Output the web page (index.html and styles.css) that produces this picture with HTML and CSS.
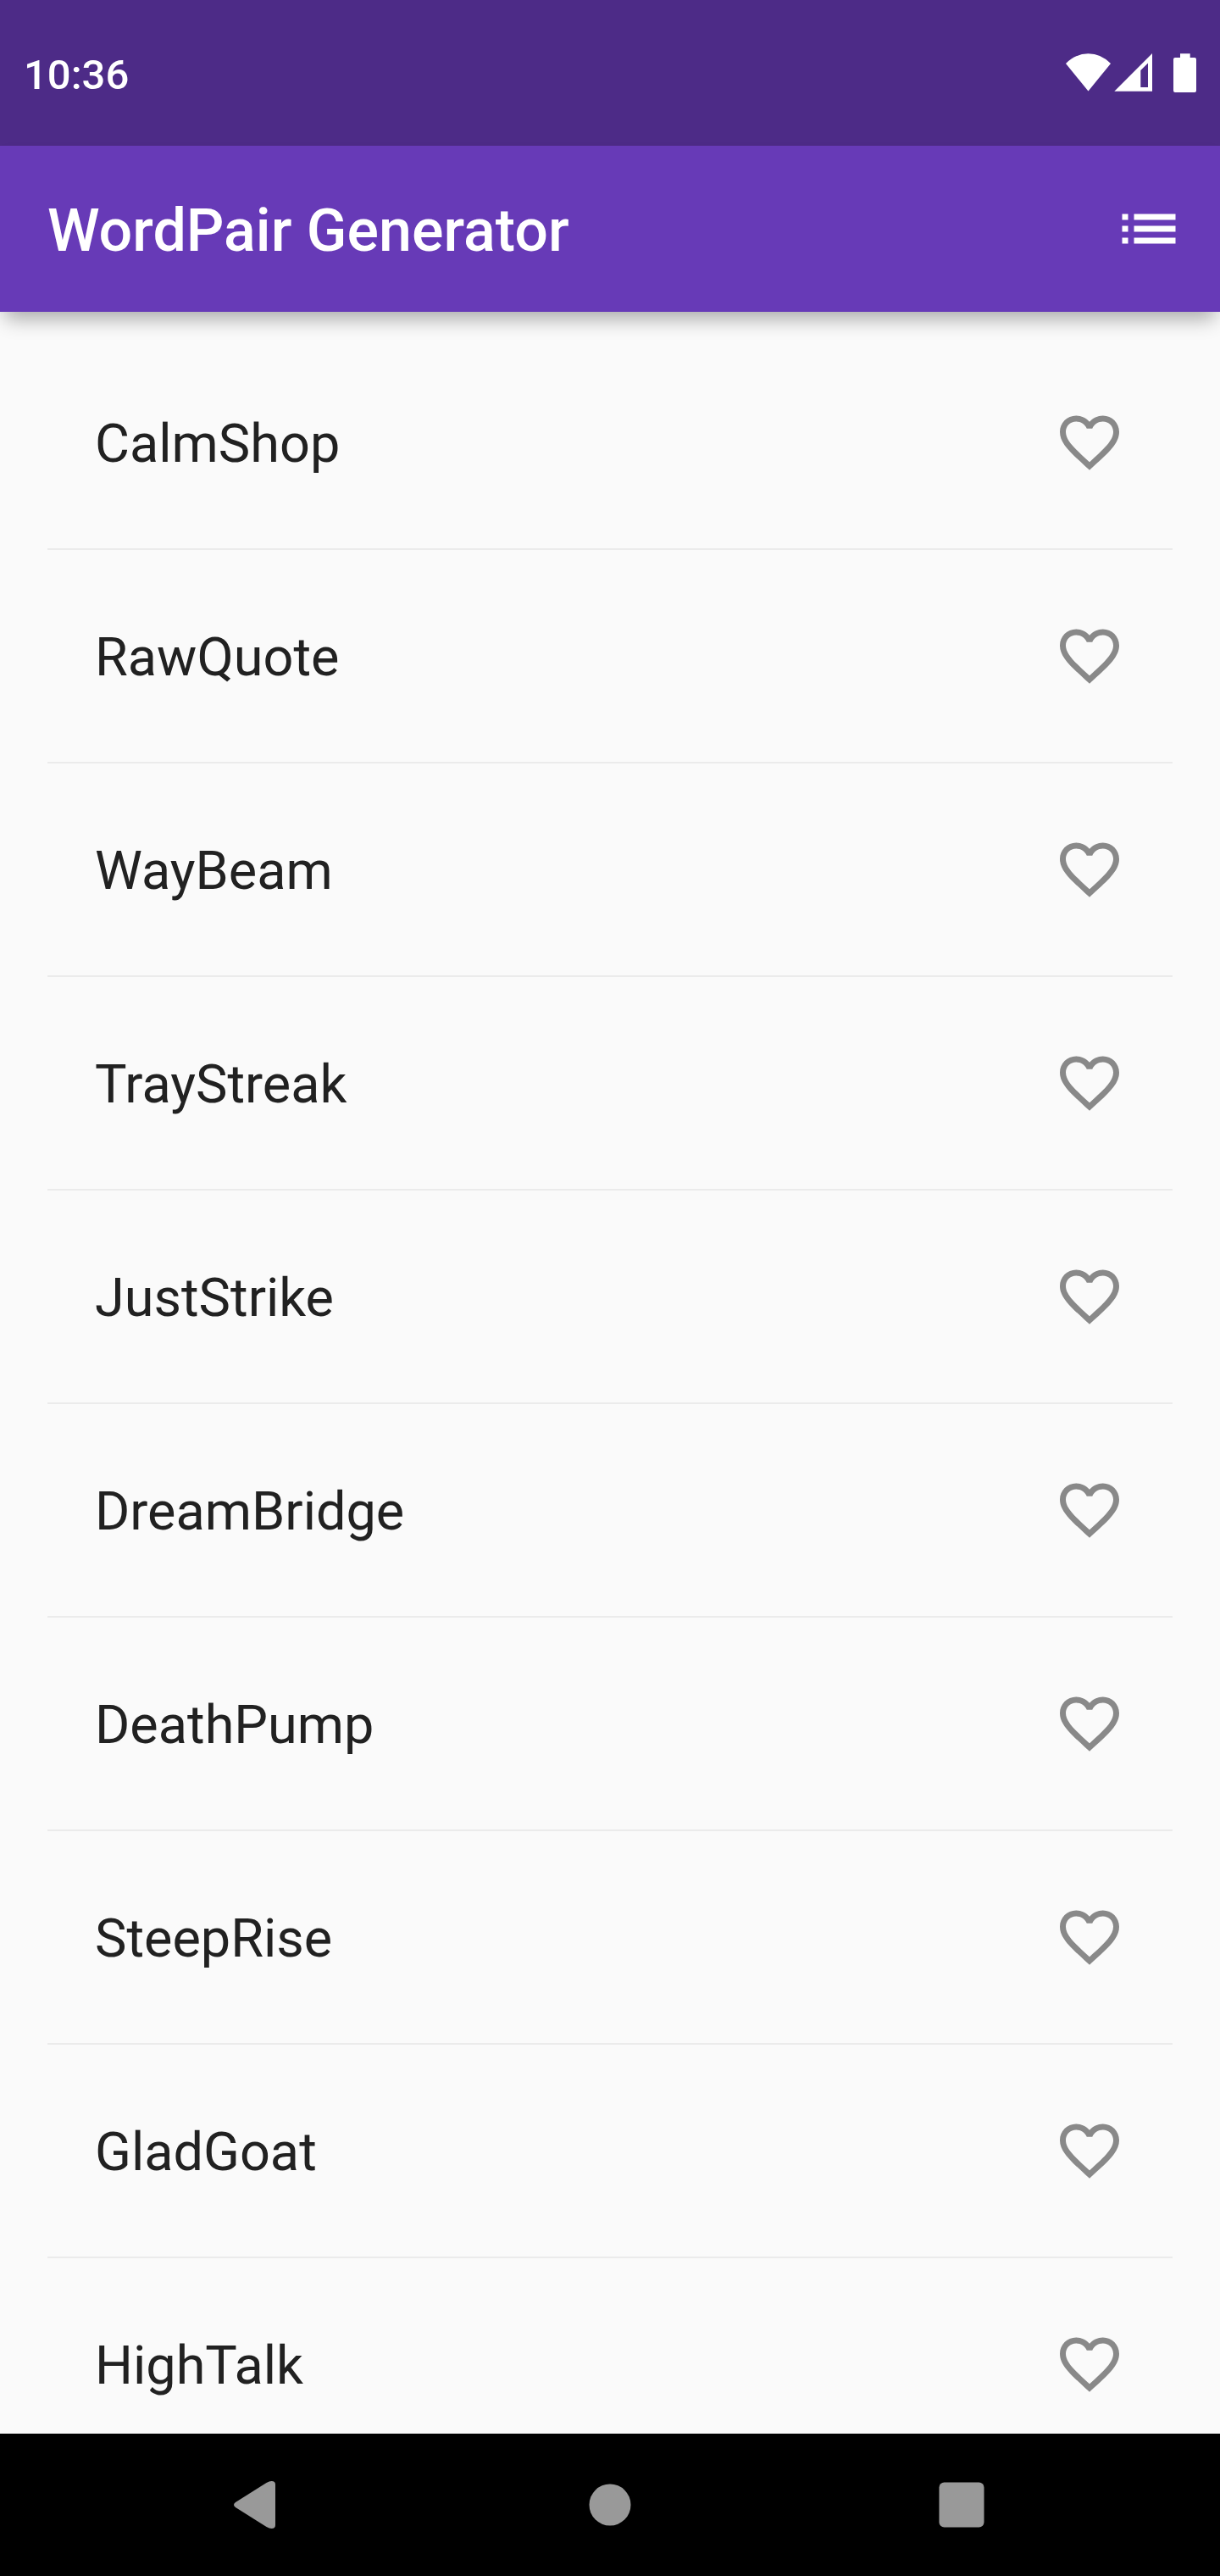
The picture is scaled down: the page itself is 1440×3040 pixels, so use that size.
FILE: index.html
```
<!DOCTYPE html>
<html lang="en">
<head>
<meta charset="utf-8">
<title>WordPair Generator</title>
<link rel="stylesheet" href="styles.css">
</head>
<body>
<svg class="defs" aria-hidden="true">
  <symbol id="heart" viewBox="0 0 24 24"><path d="M16.5 3c-1.74 0-3.41.81-4.5 2.09C10.91 3.81 9.24 3 7.5 3 4.42 3 2 5.42 2 8.5c0 3.78 3.4 6.86 8.55 11.54L12 21.35l1.45-1.32C18.6 15.36 22 12.28 22 8.5 22 5.42 19.58 3 16.5 3zm-4.4 15.55l-.1.1-.1-.1C7.14 14.24 4 11.39 4 8.5 4 6.5 5.5 5 7.5 5c1.54 0 3.04.99 3.57 2.36h1.87C13.46 5.99 14.96 5 16.5 5c2 0 3.5 1.5 3.5 3.5 0 2.89-3.14 5.74-7.9 10.05z"/></symbol>
</svg>
<div class="screen">
  <header class="status-bar">
    <span class="clock">10:36</span>
    <svg class="status-icons" viewBox="0 0 156 48">
      <path d="M0 14Q11.500 2.300 26.500 2.300T53 14L26.500 46.500Z"/>
      <path fill-rule="evenodd" d="M57.300 46.700L102 2V46.700ZM88.300 22V42H97V13.500Z"/>
      <path d="M135 2.300h11.700V7h5.300q2 0 2 2v37q0 2-2 2h-23q-2 0-2-2V9q0-2 2-2h6Z"/>
    </svg>
  </header>
  <div class="app-bar">
    <h1 class="title">WordPair Generator</h1>
    <svg class="icon" viewBox="0 0 24 24"><path d="M3 13h2v-2H3v2zm0 4h2v-2H3v2zm0-8h2V7H3v2zm4 4h14v-2H7v2zm0 4h14v-2H7v2zM7 7v2h14V7H7z"/></svg>
  </div>
  <main class="list">
    <div class="row"><span class="name">CalmShop</span><svg class="icon heart"><use href="#heart"/></svg></div>
    <hr class="divider">
    <div class="row"><span class="name">RawQuote</span><svg class="icon heart"><use href="#heart"/></svg></div>
    <hr class="divider">
    <div class="row"><span class="name">WayBeam</span><svg class="icon heart"><use href="#heart"/></svg></div>
    <hr class="divider">
    <div class="row"><span class="name">TrayStreak</span><svg class="icon heart"><use href="#heart"/></svg></div>
    <hr class="divider">
    <div class="row"><span class="name">JustStrike</span><svg class="icon heart"><use href="#heart"/></svg></div>
    <hr class="divider">
    <div class="row"><span class="name">DreamBridge</span><svg class="icon heart"><use href="#heart"/></svg></div>
    <hr class="divider">
    <div class="row"><span class="name">DeathPump</span><svg class="icon heart"><use href="#heart"/></svg></div>
    <hr class="divider">
    <div class="row"><span class="name">SteepRise</span><svg class="icon heart"><use href="#heart"/></svg></div>
    <hr class="divider">
    <div class="row"><span class="name">GladGoat</span><svg class="icon heart"><use href="#heart"/></svg></div>
    <hr class="divider">
    <div class="row"><span class="name">HighTalk</span><svg class="icon heart"><use href="#heart"/></svg></div>
  </main>
  <nav class="nav-bar">
    <svg class="nav-icon" viewBox="0 0 60 60"><path d="M3 27L39.500 4Q43 2 45.500 2Q50 2 50 6V54Q50 58 45.500 58Q43 58 39.500 56L3 33Q-1 30 3 27Z"/></svg>
    <svg class="nav-icon" viewBox="0 0 60 60"><circle cx="30" cy="30" r="24.500"/></svg>
    <svg class="nav-icon" viewBox="0 0 60 60"><rect x="3.500" y="3.500" width="53" height="53" rx="6"/></svg>
  </nav>
</div>
</body>
</html>
```
FILE: styles.css
```
body {
  margin: 0;
  font-family: Roboto, sans-serif;
  background: #fafafa;
}

.defs {
  display: none;
}

.screen {
  display: flex;
  flex-direction: column;
  width: 1440px;
  height: 3040px;
  overflow: hidden;
}

.status-bar {
  display: flex;
  flex: none;
  align-items: center;
  justify-content: space-between;
  box-sizing: border-box;
  height: 172px;
  padding: 5px 26px 0 28px;
  background: #4d2b87;
  color: #fff;
}

.clock {
  font-size: 49px;
  font-weight: 500;
  line-height: 57px;
}

.status-icons {
  width: 156px;
  height: 48px;
  margin-top: -7px;
  fill: #fff;
}

.app-bar {
  z-index: 1;
  display: flex;
  flex: none;
  align-items: center;
  justify-content: space-between;
  height: 196px;
  padding: 0 42px 0 56px;
  background: #673ab7;
  color: #fff;
  box-shadow: 0 14px 22px -6px rgba(0, 0, 0, 0.33);
}

.title {
  margin: 0;
  padding-top: 4px;
  font-size: 70px;
  font-weight: 500;
  line-height: 82px;
}

.icon {
  width: 84px;
  height: 84px;
  fill: currentColor;
}

.list {
  flex: 1;
  min-height: 0;
  padding: 56px 56px 0;
  overflow: hidden;
  font-size: 63px;
  color: #212121;
}

.row {
  display: flex;
  align-items: center;
  justify-content: space-between;
  height: 196px;
  padding: 0 56px;
}

.name {
  padding-top: 3px;
  line-height: 75px;
}

.heart {
  color: #898989;
}

.divider {
  height: 2px;
  margin: 27px 0;
  border: 0;
  background: #ebebeb;
}

.nav-bar {
  display: flex;
  flex: none;
  align-items: center;
  justify-content: center;
  gap: 355px;
  height: 168px;
  background: #000;
}

.nav-icon {
  width: 60px;
  height: 60px;
  fill: #999;
}
```
